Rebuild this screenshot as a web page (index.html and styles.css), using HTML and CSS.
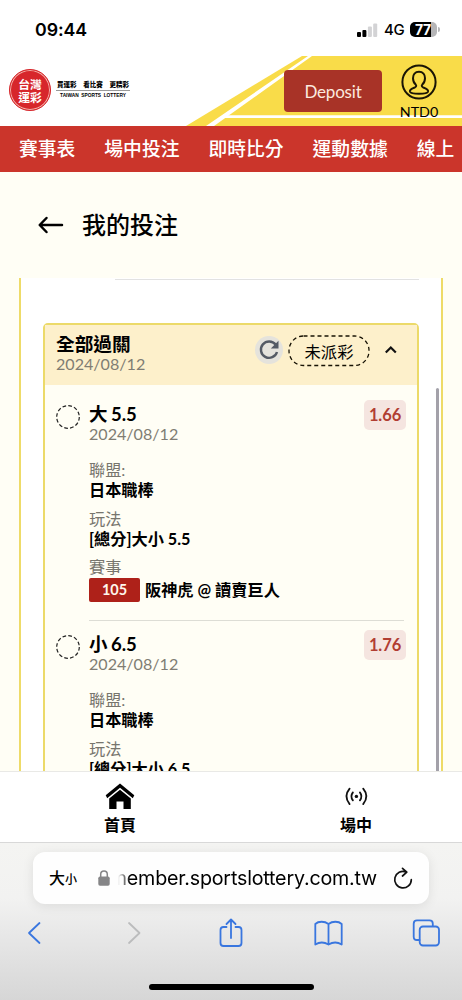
FILE: index.html
```html
<!DOCTYPE html>
<html lang="zh-Hant">
<head>
<meta charset="utf-8">
<meta name="viewport" content="width=device-width, initial-scale=1">
<title>我的投注</title>
<link rel="stylesheet" href="styles.css">
</head>
<body>
<div class="screen">
  <div class="status">
    <span class="time">09:44</span>
    <svg class="signal" width="20" height="14" viewBox="0 0 20 14"><rect x="0" y="9" width="4" height="5" rx="1"/><rect x="5.4" y="7" width="4" height="7" rx="1"/><rect class="off" x="10.9" y="3.5" width="4" height="10.5" rx="1"/><rect class="off" x="16.2" y="0.5" width="4" height="13.5" rx="1"/></svg>
    <span class="network">4G</span>
    <span class="battery"><span class="charge">77</span></span>
    <span class="battery-cap"></span>
  </div>

  <header class="header">
    <svg class="banner" width="462" height="70" viewBox="0 0 462 70">
      <path d="M186 70 302 0H462V70Z" fill="#f9dc49"/>
      <path d="M206 70 308 0H312L214 70Z" fill="#fff"/>
      <path d="M223 59.3H462V62H219Z" fill="#fff"/>
    </svg>
    <div class="logo">
      <span class="seal">台灣<br>運彩</span>
      <span class="slogan"><b>買運彩<i></i>看比賽<i></i>更精彩</b><small>TAIWAN&nbsp; SPORTS&nbsp; LOTTERY</small></span>
    </div>
    <button class="deposit">Deposit</button>
    <div class="account">
      <svg width="36" height="36" viewBox="0 0 36 36" fill="none" stroke="#1a1505" stroke-width="2"><circle cx="18" cy="18" r="16.6"/><path d="M18 7.8c-4 0-6 2.900-6 6.500 0 3 1.200 5 2.700 6.300 1 1 .4 2.400-1 2.900-3.700 1.300-5.200 2.400-4.700 4.200.5 1.500 3.900 2 9 2s8.500-.5 9-2c.5-1.800-1-2.900-4.700-4.200-1.400-.5-2-1.900-1-2.900 1.500-1.300 2.700-3.300 2.700-6.300 0-3.600-2-6.500-6-6.500Z"/></svg>
      <span>NTD0</span>
    </div>
  </header>

  <nav class="menu"><a>賽事表</a><a>場中投注</a><a>即時比分</a><a>運動數據</a><a>線上</a></nav>

  <div class="heading">
    <svg width="26" height="18" viewBox="0 0 26 18" fill="none" stroke="#000" stroke-width="2.500" stroke-linecap="round" stroke-linejoin="round"><path d="M24 9H2M8.500 2 1.700 9l6.800 7"/></svg>
    <h1>我的投注</h1>
  </div>

  <main class="scroller">
    <div class="panel">
      <div class="field"></div>
      <section class="ticket">
        <div class="ticket-head">
          <div class="ticket-name"><strong>全部過關</strong><span class="date">2024/08/12</span></div>
          <span class="refresh"><svg width="20" height="20" viewBox="0 0 20 20" fill="none"><path d="M16.600 4.600A8.200 8.200 0 1 0 18 12" stroke="#555b65" stroke-width="2.400"/><path d="M19.500.8V8.400H11.800Z" fill="#555b65"/></svg></span>
          <span class="state"><svg width="82" height="32" viewBox="0 0 82 32" fill="none"><rect x="1" y="1" width="80" height="29.500" rx="14.500" stroke="#171204" stroke-width="1.300" stroke-dasharray="4 3"/></svg><span>未派彩</span></span>
          <svg class="chevron" width="14" height="10" viewBox="0 0 14 10" fill="none" stroke="#111" stroke-width="2.200"><path d="m1.800 7.500 5-5 5 5"/></svg>
        </div>
        <div class="legs">
          <article class="leg">
            <svg class="ring" width="24" height="24" viewBox="0 0 24 24"><circle cx="12" cy="12" r="11.300" fill="none" stroke="#222" stroke-width="1.200" stroke-dasharray="3.700 2.210"/></svg>
            <div class="detail">
              <div class="pick"><strong>大 5.5</strong><span class="odds">1.66</span></div>
              <div class="date">2024/08/12</div>
              <dl>
                <dt>聯盟:</dt><dd>日本職棒</dd>
                <dt>玩法</dt><dd>[總分]大小 5.5</dd>
                <dt>賽事</dt><dd class="match"><span class="code">105</span>阪神虎 @ 讀賣巨人</dd>
              </dl>
            </div>
          </article>
          <article class="leg">
            <svg class="ring" width="24" height="24" viewBox="0 0 24 24"><circle cx="12" cy="12" r="11.300" fill="none" stroke="#222" stroke-width="1.200" stroke-dasharray="3.700 2.210"/></svg>
            <div class="detail">
              <div class="pick"><strong>小 6.5</strong><span class="odds">1.76</span></div>
              <div class="date">2024/08/12</div>
              <dl>
                <dt>聯盟:</dt><dd>日本職棒</dd>
                <dt>玩法</dt><dd>[總分]大小 6.5</dd>
              </dl>
            </div>
          </article>
        </div>
      </section>
      <div class="scrollbar"></div>
    </div>
  </main>

  <nav class="tabs">
    <a><svg width="30" height="28" viewBox="0 0 30 28"><path d="M0.700 13.300 15 1.500l14.300 11.800-1.500 3L15 5.700 2.200 16.300Z"/><path d="M15 7.700 25.800 16.500V27H18.500V19.500H11.500V27H4.200V16.500Z"/></svg><span>首頁</span></a>
    <a><svg width="30" height="28" viewBox="0 0 30 28" fill="none" stroke="#111" stroke-width="1.800" stroke-linecap="round"><circle cx="15.400" cy="14.400" r="1.700" fill="#111" stroke="none"/><path d="M11.900 10.400q-3 4 0 8M18.900 10.400q3 4 0 8M8.600 6.700q-6.400 7.700 0 15.400M22.200 6.700q6.400 7.700 0 15.400"/></svg><span>場中</span></a>
  </nav>

  <footer class="browser">
    <div class="address">
      <span class="size">大<small>小</small></span>
      <svg class="lock" width="12" height="16" viewBox="0 0 12 16"><rect x=".3" y="6.500" width="11.400" height="9.300" rx="1.700" fill="#858587"/><path d="M2.700 7V4.400a3.300 3.300 0 0 1 6.600 0V7" fill="none" stroke="#858587" stroke-width="1.500"/></svg>
      <span class="url"><span>member.sportslottery.com.tw</span></span>
      <svg class="reload" width="20" height="22" viewBox="0 0 20 22" fill="none" stroke="#111" stroke-width="1.700" stroke-linecap="round" stroke-linejoin="round"><path d="M13 4.900A8.300 8.300 0 1 0 18.300 12.700M9.500 1.300l4.300 3.800-4.300 3.900"/></svg>
    </div>
    <div class="tools">
      <svg width="28" height="30" viewBox="0 0 28 30"><path d="M19.500 5 9 15l10.500 10"/></svg>
      <svg class="disabled" width="28" height="30" viewBox="0 0 28 30"><path d="m11 5 10.500 10L11 25"/></svg>
      <svg width="28" height="30" viewBox="0 0 28 30"><path d="M10.500 9H7.500Q4.500 9 4.500 12v13q0 3 3 3h15q3 0 3-3V12q0-3-3-3h-3M15 20V1.500M10.500 6 15 1.500 19.500 6"/></svg>
      <svg width="28" height="30" viewBox="0 0 28 30"><path d="M14.500 6C10.500 3 4.500 3 1.300 6V26.500c4-2.500 9-2.500 13.200 0 4.200-2.500 9.200-2.500 13.200 0V6C24.500 3 18.500 3 14.500 6ZM14.500 6V26.500"/></svg>
      <svg width="28" height="30" viewBox="0 0 28 30"><path d="M7.500 22H5Q1.700 22 1.700 18.700V5.700Q1.700 2.400 5 2.400H17.500Q20.800 2.400 20.800 5.700V8"/><rect x="7.700" y="8.500" width="19.300" height="19" rx="3.300"/></svg>
    </div>
    <div class="home-bar"></div>
  </footer>
</div>
</body>
</html>
```
FILE: styles.css
```css
* { box-sizing: border-box; }
body { margin: 0; background: #fff; color: #000; font-family: Lato, "Noto Sans CJK TC", sans-serif; }
svg { display: block; flex: none; overflow: visible; }
.screen { width: 462px; height: 1000px; overflow: hidden; display: flex; flex-direction: column; }

.status { height: 56px; flex: none; display: flex; align-items: center; padding: 3px 22px 0 35px; font-family: Inter, sans-serif; }
.time { font-size: 17.800px; font-weight: 600; letter-spacing: -.1px; margin-right: auto; }
.signal .off { fill: #d3d3d5; }
.network { font-size: 15px; font-weight: 500; margin-left: 7px; width: 20px; letter-spacing: -.3px; }
.battery { width: 27px; height: 15px; margin-left: 6px; border-radius: 5px; overflow: hidden; background: linear-gradient(90deg, #000 0 21px, #b5b5b7 21px); }
.charge { display: block; padding-left: 5px; font-size: 14px; line-height: 15px; font-weight: 700; letter-spacing: -.5px; color: #fff; }
.battery-cap { width: 2px; height: 5px; margin-left: 1px; border-radius: 0 2px 2px 0; background: #b5b5b7; }

.header { position: relative; height: 70px; flex: none; display: flex; align-items: flex-start; padding-left: 9px; }
.banner { position: absolute; inset: 0; z-index: -1; }
.logo { display: flex; align-items: center; margin-top: 13px; width: 275px; }
.seal { width: 42px; height: 42px; border-radius: 50%; background: #d7262b; border: 1px solid #d7262b; box-shadow: inset 0 0 0 1px #f3b1a9; color: #fff; padding-top: 7px; text-align: center; font: 700 11.800px/13px "Noto Sans CJK TC", sans-serif; }
.slogan { margin-left: 5px; width: 74px; display: flex; flex-direction: column; align-items: center; margin-top: -2px; }
.slogan b { width: 100%; font: 900 6.500px/12px "Noto Sans CJK TC", sans-serif; display: flex; justify-content: space-between; border-bottom: 1px solid #999; padding: 0 1px; }
.slogan small { font: 700 4.800px/9px "Liberation Sans", sans-serif; white-space: nowrap; }
.deposit { width: 98px; height: 42px; margin-top: 14px; border: 0; border-radius: 4px; background: #a83327; color: #fce9df; font: 17px Lato, sans-serif; letter-spacing: -.2px; padding: 0; }
.account { width: 60px; margin-left: 7px; display: flex; flex-direction: column; align-items: center; padding-top: 8px; font-size: 14.300px; line-height: 20px; }
.account span { margin-top: 2px; }

.menu { height: 46px; flex: none; background: #cb352b; color: #fff; display: flex; align-items: center; gap: 29px; padding: 0 0 3px 19px; white-space: nowrap; overflow: hidden; font-size: 18.800px; font-weight: 500; }
.heading { height: 106px; flex: none; background: #fffef5; display: flex; align-items: center; padding-left: 38px; }
.heading h1 { margin: 0 0 0 18px; font-size: 24px; line-height: 34px; font-weight: 500; }

.scroller { height: 493px; flex: none; overflow: hidden; background: #fffef5; padding: 0 19px; }
.panel { position: relative; height: 493px; width: 424px; background: #fff; border: solid #eedb68; border-width: 0 2px; padding: 0 22px; }
.field { height: 2px; margin: 0 0 43px 72px; border-bottom: 1px solid #e2e2e2; }
.scrollbar { position: absolute; right: 2px; top: 110px; width: 3px; height: 400px; background: #a3a1a9; border-radius: 2px 2px 0 0; }
.ticket { height: 600px; border: 2px solid #ecda69; border-radius: 5px; background: #fffef5; }
.ticket-head { height: 60px; background: #fdf0cb; display: flex; align-items: flex-start; padding-left: 11px; }
.ticket-name { width: 199px; padding-top: 8px; }
.ticket strong { font-weight: 700; word-spacing: -1px; }
.ticket-name strong { display: block; font-size: 18.700px; line-height: 22px; }
.date { display: block; font-size: 16.100px; line-height: 18px; color: #807d73; }
.refresh { width: 28px; height: 28px; border-radius: 50%; background: #e5e3dc; display: grid; place-items: center; margin-top: 11px; }
.state { position: relative; width: 82px; height: 32px; margin: 10px 0 0 5px; display: grid; place-items: center; font-size: 16.300px; }
.state svg { position: absolute; inset: 0; }
.chevron { margin: 20px 0 0 14px; }
.legs { padding: 5px 13px 0 11px; }
.leg { display: flex; height: 230.400px; }
.ring { margin-top: 15px; }
.detail { flex: 1; margin-left: 9px; border-top: 1px solid #ddddd5; }
.leg:first-child .detail { border-color: transparent; }
.pick { display: flex; justify-content: space-between; height: 34px; padding-top: 9px; font-size: 18.500px; line-height: 28px; }
.odds { width: 42px; height: 30px; margin-right: -2px; border-radius: 5px; background: #f5e5e0; color: #b13d32; font-size: 16.500px; letter-spacing: -.1px; font-weight: 700; line-height: 30px; text-align: center; }
dl { margin: 17px 0 0; font-size: 16.200px; line-height: 20px; }
dt { color: #77756d; height: 20px; }
dd { margin: 0 0 8.500px; height: 20px; font-weight: 700; }
.match { display: flex; align-items: center; height: 25px; }
.code { width: 51px; height: 24px; margin-right: 5px; border-radius: 2px; background: #ae2119; color: #fff6ec; font-size: 14.500px; line-height: 24px; text-align: center; }

.tabs { height: 71px; flex: none; background: #fff; border-top: 1px solid #e9e9e6; display: flex; padding-left: 2px; }
.tabs a { flex: none; width: 236px; display: flex; flex-direction: column; align-items: center; padding-top: 10px; font-size: 16px; line-height: 22px; font-weight: 700; }
.tabs span { margin-top: 4px; }

.browser { height: 158px; flex: none; border-top: 1px solid #d8d8d8; background: linear-gradient(#f4f4f2 0, #f2f2f1 55px, #e8e8e8 90px, #d6d6d6 158px); padding-top: 9px; }
.address { width: 396px; height: 52px; margin-left: 33px; border-radius: 12px; background: #fefefe; box-shadow: 0 2px 12px rgba(0,0,0,.09); display: flex; align-items: center; padding-left: 16px; }
.size { font: 500 16px/22px "Noto Sans CJK TC", sans-serif; width: 49px; }
.size small { font-size: 12px; }
.url { width: 259px; margin-left: 8px; height: 28px; overflow: hidden; display: flex; justify-content: flex-end; font: 19.700px/28px Inter, sans-serif; letter-spacing: -.2px; -webkit-mask-image: linear-gradient(90deg, transparent, #000 12px); mask-image: linear-gradient(90deg, transparent, #000 12px); }
.reload { margin-left: 16px; }
.tools { display: flex; justify-content: space-between; padding: 0 22px 0 20px; margin-top: 14px; fill: none; stroke: #3976df; stroke-width: 1.800; stroke-linecap: round; stroke-linejoin: round; }
.disabled { stroke: #bbbcbd; }
.home-bar { width: 165px; height: 6px; border-radius: 3px; background: #000; margin: 36px 0 0 149px; }
```
